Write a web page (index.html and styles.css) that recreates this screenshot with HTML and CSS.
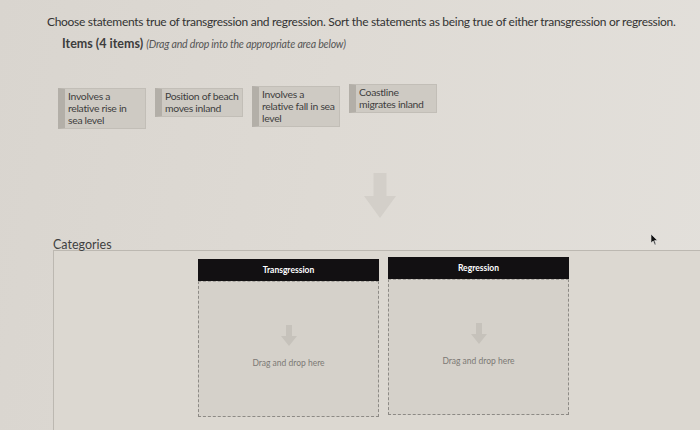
FILE: index.html
```html
<!DOCTYPE html>
<html>
<head>
  <meta charset="utf-8">
  <link rel="stylesheet" href="styles.css">
</head>
<body>
  <div class="question">
    <p class="prompt">Choose statements true of transgression and regression. Sort the statements as being true of either transgression or regression.</p>
    <div class="items-label">Items (4 items) <span class="hint">(Drag and drop into the appropriate area below)</span></div>

    <div class="items">
      <div class="item">Involves a<br>relative rise in<br>sea level</div>
      <div class="item">Position of beach<br>moves inland</div>
      <div class="item">Involves a<br>relative fall in sea<br>level</div>
      <div class="item">Coastline<br>migrates inland</div>
    </div>

    <div class="big-arrow">
      <svg width="32" height="45" viewBox="0 0 32 45">
        <path d="M9.5 0 H22.5 V23 H32 L16 45 L0 23 H9.5 Z" fill="#d3cfc9"/>
      </svg>
    </div>

    <div class="categories-title">Categories</div>
  </div>

  <div class="categories">
    <div class="category">
      <div class="category-head">Transgression</div>
      <div class="dropzone">
        <svg width="16" height="21" viewBox="0 0 16 21">
          <path d="M5 0 H11 V11 H16 L8 21 L0 11 H5 Z" fill="#c6c2bb"/>
        </svg>
        <span>Drag and drop here</span>
      </div>
    </div>
    <div class="category">
      <div class="category-head">Regression</div>
      <div class="dropzone">
        <svg width="16" height="21" viewBox="0 0 16 21">
          <path d="M5 0 H11 V11 H16 L8 21 L0 11 H5 Z" fill="#c6c2bb"/>
        </svg>
        <span>Drag and drop here</span>
      </div>
    </div>
  </div>

  <svg class="cursor" width="8" height="12" viewBox="0 0 8 12">
    <path d="M0 0 L0 9 L2.2 7 L3.8 11 L5 10.5 L3.5 6.6 L6.5 6.6 Z" fill="#111" stroke="#eee" stroke-width="0.6"/>
  </svg>
</body>
</html>
```

FILE: styles.css
```css
* {
  margin: 0;
  padding: 0;
  box-sizing: border-box;
}

body {
  width: 700px;
  height: 430px;
  overflow: hidden;
  position: relative;
  font-family: 'Lato', 'Open Sans', sans-serif;
  color: #363636;
  background: linear-gradient(100deg, #d9d5cf 0%, #dedad4 45%, #e3e0db 100%);
}

.question {
  padding: 14px 0 0 47px;
}

.prompt {
  font-size: 12px;
  letter-spacing: -0.3px;
  line-height: 16px;
  white-space: nowrap;
  color: #333;
}

.items-label {
  margin: 6px 0 0 15px;
  font-size: 12.5px;
  font-weight: 700;
  color: #3d3d3d;
}

.items-label .hint {
  font-size: 10.6px;
  font-weight: 400;
  font-style: italic;
  color: #555;
  letter-spacing: -0.2px;
}

/* draggable statement cards */
.items {
  display: flex;
  align-items: flex-start;
  gap: 9px;
  margin: 37px 0 0 11px;
}

.item {
  width: 88px;
  padding: 1px 2px 2px 3px;
  background: #cecac3;
  border: 1px solid #c2beb7;
  border-left: 7px solid #b3afa8;
  font-size: 10.4px;
  line-height: 12px;
  color: #3e3e3e;
  letter-spacing: -0.3px;
  white-space: nowrap;
}

.item:nth-child(3) { margin-top: -2px; }
.item:nth-child(4) { margin-top: -4px; }

/* hint arrow pointing down to the categories */
.big-arrow {
  display: flex;
  margin-top: 44px;
  padding-left: 317px;
}

.categories-title {
  margin: 19px 0 0 6px;
  font-size: 12.5px;
  color: #3f3f3f;
}

/* category frame with the two drop columns */
.categories {
  display: flex;
  justify-content: center;
  gap: 9px;
  width: 660px;
  height: 184px;
  margin: -2px 0 0 53px;
  padding-top: 8px;
  border-top: 1px solid #bcb8b1;
  border-left: 1px solid #bcb8b1;
  background: #dcd8d1;
}

.category {
  width: 181px;
  display: flex;
  flex-direction: column;
}

.category:last-child {
  margin-top: -2px;
}

.category-head {
  height: 22px;
  background: #121012;
  color: #fff;
  font-size: 8.5px;
  font-weight: 700;
  display: flex;
  align-items: center;
  justify-content: center;
}

.dropzone {
  height: 136px;
  border: 1px dashed #8d8a85;
  border-top: 1px dashed #a6a39e;
  background: #d5d1ca;
  display: flex;
  flex-direction: column;
  align-items: center;
  padding-top: 43px;
  gap: 12px;
}

.dropzone span {
  font-size: 8.5px;
  color: #7c7975;
}

.cursor {
  position: absolute;
  left: 651px;
  top: 234px;
}
```
